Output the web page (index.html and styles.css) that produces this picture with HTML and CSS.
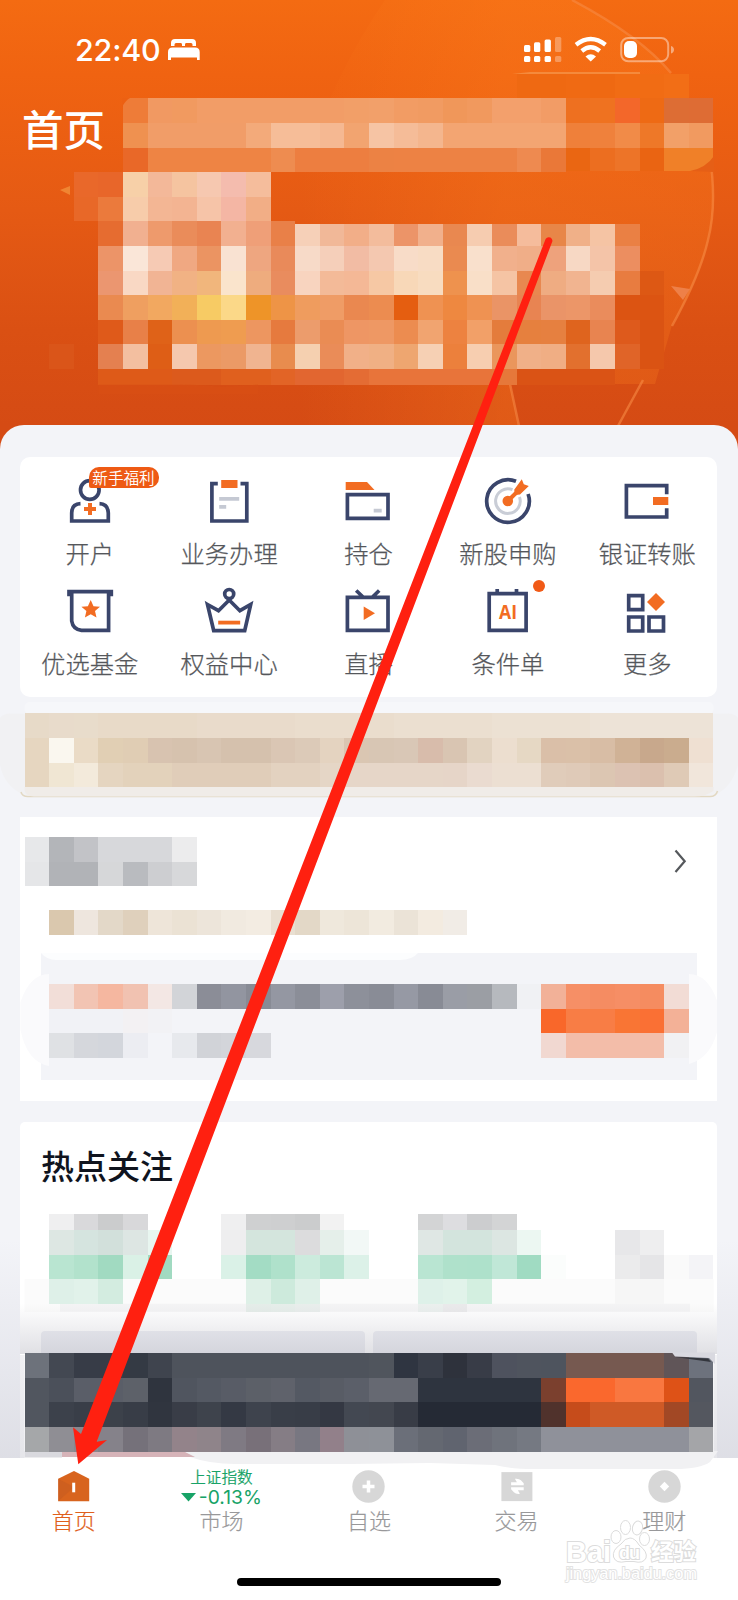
FILE: index.html
```html
<!DOCTYPE html>
<html lang="zh-CN">
<head>
<meta charset="utf-8">
<title>首页</title>
<link rel="stylesheet" href="styles.css">
</head>
<body>
<div class="page">
  <main class="content">
    <header class="hero">
      <svg class="hero-art" viewBox="0 0 738 450" aria-hidden="true">
        <defs>
          <linearGradient id="disc" x1="0" y1="0" x2="1" y2="0">
            <stop offset="0" stop-color="#ff8420" stop-opacity="0"/>
            <stop offset="0.5" stop-color="#ff8420" stop-opacity=".27"/>
            <stop offset="1" stop-color="#ff8420" stop-opacity=".22"/>
          </linearGradient>
        </defs>
        <path d="M385 0H572Q640 36 672 75Q713 128 714 200Q712 260 672 325L655 384H510L519 430H300V180Q330 80 385 0Z" fill="url(#disc)"/>
        <path d="M572 0Q640 36 671 73M710 157Q717 205 708 240Q700 275 672 326M643 380L618 426M510 384L519 426" fill="none" stroke="#f68b45" stroke-width="2.5" opacity=".6"/>
        <path d="M671 286L690 289L683 300Z" fill="#ee8048"/>
        <path d="M60 190L70 186V195Z" fill="#f08532"/>
        <path d="M512 74L530 72H640V74Z" fill="#f58a3c"/>
        <g data-mosaic="hero" shape-rendering="crispEdges"></g>
        <path d="M690 171Q706 168 714 156V172Z" fill="#e65f16"/>
        <path d="M122 98H130Q126 100 122 107Z" fill="#ec6012"/>
        <path d="M98.400 384.500H172Q200 384 222 387L258 384.500V394H98.400Z" fill="#da5014" opacity=".5"/>
      </svg>
      <div class="status">
        <div class="status-left">
          <span class="clock">22:40</span>
          <svg width="32" height="22" viewBox="168 40 32 22"><path d="M171 47V44Q171 40 175 40H192Q196 40 196 44V47H192.500V45.500Q192.500 44 191 44H186Q185 44 185 45.500V47H182V45.500Q182 44 181 44H176Q174.500 44 174.500 45.500V47ZM168 61V53Q168 48.500 172.500 48.500H195Q199.700 48.500 199.700 53V61H197V58.500H171V61Z" fill="#fff"/></svg>
        </div>
        <svg width="152" height="28" viewBox="523 36 152 28">
          <g fill="#fff">
            <rect x="524" y="45" width="6.300" height="7" rx="1.500"/><rect x="534" y="42.300" width="6.300" height="9.700" rx="1.500"/><rect x="544.600" y="39.500" width="6.300" height="12.500" rx="1.500"/>
            <rect x="524" y="56" width="6.300" height="6" rx="1.500"/><rect x="534" y="56" width="6.300" height="6" rx="1.500"/><rect x="544.600" y="56" width="6.300" height="6" rx="1.500"/>
            <g opacity=".3"><rect x="555" y="37" width="6.300" height="15" rx="1.500"/><rect x="555" y="56" width="6.300" height="6" rx="1.500"/></g>
            <path d="M590.700 61.500L585.500 56.500Q590.700 52 596 56.500Z"/>
          </g>
          <path d="M576 44.800Q590.700 33.300 605.500 44.800M581.800 51Q590.700 43.500 599.700 51" fill="none" stroke="#fff" stroke-width="4.300"/>
          <rect x="621.200" y="38" width="47" height="23.300" rx="7" fill="none" stroke="#fff" stroke-opacity=".42" stroke-width="2"/>
          <path d="M671 46Q674 47 674 49.700Q674 52.500 671 53.500Z" fill="#fff" opacity=".45"/>
          <rect x="624" y="41" width="13" height="17" rx="5" fill="#fff"/>
        </svg>
      </div>
      <h1 class="hero-title">首页</h1>
    </header>

    <div class="sheet">
      <section class="card shortcuts">
        <div class="shortcut">
          <svg class="shortcut-icon" viewBox="60 470 60 60"><circle class="ln" cx="89.800" cy="490" r="9.300"/><path class="ln" d="M80.500 503.700Q71.700 504 71.700 513V521H108.300V513Q108 504 99.500 503.700"/><path d="M90 503V515M84 509H96" stroke="#f26c22" stroke-width="4"/></svg>
          <span class="label">开户</span><span class="badge">新手福利</span>
        </div>
        <div class="shortcut">
          <svg class="shortcut-icon" viewBox="199.500 470 60 60"><path class="ln" d="M218.300 483.700H212.400V521H247.300V483.700H241"/><path d="M221.700 480H238V488H221.700Z" fill="#f26c22"/><path d="M219.700 497H239.700V500.700H219.700ZM219.700 505H226.700V508.700H219.700Z" fill="#c5c9d3"/></svg>
          <span class="label">业务办理</span>
        </div>
        <div class="shortcut">
          <svg class="shortcut-icon" viewBox="339 470 60 60"><path d="M346.700 482H368L375.500 490H346.700Z" fill="#f26c22"/><path class="ln" d="M348.400 494.700H389V518.300H348.400Z"/><path d="M374.700 508.700H382.700V512.500H374.700Z" fill="#c5c9d3"/></svg>
          <span class="label">持仓</span>
        </div>
        <div class="shortcut">
          <svg class="shortcut-icon" viewBox="478.500 470 60 60"><path class="ln" d="M516.500 481.300A21.300 21.300 0 1 0 528.600 494"/><path d="M513 489.700A12.300 12.300 0 1 0 520 497" fill="none" stroke="#c9cdd6" stroke-width="3"/><circle cx="508.300" cy="501" r="5.300" fill="#f26c22"/><path d="M508.300 501L518.500 491" stroke="#f26c22" stroke-width="4"/><path d="M514.700 489.700L522.300 479.300L524.300 484.300L529.300 486L520.500 494.500L515.500 495Z" fill="#f26c22"/></svg>
          <span class="label">新股申购</span>
        </div>
        <div class="shortcut">
          <svg class="shortcut-icon" viewBox="618 470 60 60"><path class="ln" d="M667.700 494.300V485.700H627.400V517H667.700V508.300"/><path d="M654 497H669.300V505H654Z" fill="#f26c22"/></svg>
          <span class="label">银证转账</span>
        </div>
        <div class="shortcut">
          <svg class="shortcut-icon" viewBox="60 580 60 60"><path class="ln" d="M69 596.300V591.700H111.300V596.300M71.700 592V621Q73 629.500 81.500 630.300H108.600V592"/><path d="M90.700 600L93.500 606.200L100 606.800L95 611.100L96.500 617.500L90.700 614.200L84.900 617.500L86.400 611.100L81.400 606.800L87.900 606.200Z" fill="#f26c22"/></svg>
          <span class="label">优选基金</span>
        </div>
        <div class="shortcut">
          <svg class="shortcut-icon" viewBox="199.500 580 60 60"><circle class="ln" cx="229.700" cy="594" r="4.500"/><path class="ln" d="M208 604.500L219 610.700L229.700 600L240.400 610.700L251.200 604.500L245.200 630.700H214.200Z"/><path d="M218.700 620.700H240.700V624.500H218.700Z" fill="#f26c22"/></svg>
          <span class="label">权益中心</span>
        </div>
        <div class="shortcut">
          <svg class="shortcut-icon" viewBox="339 580 60 60"><path class="ln" d="M348.400 597.400H389V630.300H348.400ZM357.200 590.500L364 597M380.200 590.500L373.500 597"/><path d="M364.700 606.500V620L376 613.200Z" fill="#f26c22"/></svg>
          <span class="label">直播</span>
        </div>
        <div class="shortcut">
          <svg class="shortcut-icon" viewBox="478.500 580 60 60"><path class="ln" d="M489.700 593.700H526.600V630.300H489.700ZM497.700 589V594M517 589V594"/><text class="ai" x="499.500" y="618.700" textLength="18" lengthAdjust="spacingAndGlyphs">AI</text></svg>
          <span class="label">条件单</span><i class="dot"></i>
        </div>
        <div class="shortcut">
          <svg class="shortcut-icon" viewBox="618 580 60 60"><path class="ln" d="M629.700 595.700H643.700V609.700H629.700ZM629.700 617H643.700V631H629.700ZM650 617H664.500V631H650Z"/><path d="M657 593L666 602L657 611L648 602Z" fill="#f26c22"/></svg>
          <span class="label">更多</span>
        </div>
      </section>

      <svg class="banner" viewBox="0 702 738 100" aria-hidden="true">
        <rect x="24.600" y="702" width="689" height="12" rx="5" fill="#f6f7fa"/>
        <path d="M0 718Q3 713.400 10 713.400H728Q735 713.400 738 718V765Q732 787 715 795H24Q4 786 0 765Z" fill="#f1f1f3"/>
        <path d="M21 792Q22 796.500 28 796.500H710Q716 796.500 717.500 791" fill="none" stroke="#e2d8c2" stroke-width="1.500"/>
        <path d="M24.600 787H713.400V791Q706 796.500 694 796.500H34Q26 796 24.600 791Z" fill="#f0ece8"/>
        <g data-mosaic="banner" shape-rendering="crispEdges"></g>
      </svg>

      <section class="card feature">
        <svg class="row-art" width="697" height="49" viewBox="20 836.500 697 49"><g data-mosaic="featureTitle" shape-rendering="crispEdges"></g><path d="M675.500 850L684.700 860.700L675.500 871.500" fill="none" stroke="#55585c" stroke-width="2.200"/></svg>
        <svg class="row-art feature-sub" width="697" height="25" viewBox="20 910 697 25"><g data-mosaic="featureSub" shape-rendering="crispEdges"></g></svg>
        <div class="panel">
          <svg class="panel-art" width="697" height="127" viewBox="20 953 697 127">
            <path d="M41 953H418Q412 960 400 960H56Q47 960 41 953Z" fill="#fcfdfe"/>
            <path d="M20.500 1002Q30 974 49 974V1066Q27 1062 20.500 1030ZM717.500 1002Q708 974 689 974V1064Q711 1058 717.500 1030Z" fill="#fafafc"/>
            <g data-mosaic="panel" shape-rendering="crispEdges"></g>
          </svg>
        </div>
      </section>

      <section class="card hot">
        <h2 class="hot-title">热点关注</h2>
        <svg class="row-art" width="697" height="98" viewBox="20 1214 697 98"><rect x="24.600" y="1279.200" width="689" height="33" fill="#fbfbfb"/><rect x="60" y="1303.800" width="630" height="8" fill="#f4f4f5"/><g data-mosaic="hot" shape-rendering="crispEdges"></g></svg>
        <div class="hot-links"><span></span><span></span></div>
      </section>
    </div>
    <svg class="notice" viewBox="0 1240 738 238" aria-hidden="true">
      <defs>
        <linearGradient id="shade" x1="0" y1="0" x2="0" y2="1"><stop offset="0" stop-color="#b8b8c8" stop-opacity="0"/><stop offset="1" stop-color="#b8b8c4" stop-opacity=".36"/></linearGradient>
        <linearGradient id="shade2" x1="0" y1="0" x2="0" y2="1"><stop offset="0" stop-color="#a8a8b4" stop-opacity="0"/><stop offset="1" stop-color="#a8a8b4" stop-opacity=".36"/></linearGradient>
      </defs>
      <path d="M0 1240H20V1355H24.600V1458H0ZM738 1240H717V1355H713.400V1458H738Z" fill="url(#shade)"/>
      <rect x="20" y="1304" width="697" height="50" fill="url(#shade2)"/>
      <path d="M24.600 1451H718L710 1462Q700 1469 675 1469H535Q510 1469 495 1465L430 1463L350 1464H235Q210 1464 190 1457H24.600Z" fill="#f1f1f3"/>
      <path d="M24.600 1451H62V1457.500H24.600Z" fill="#d9d9de"/>
      <path d="M62 1451.400H184L195 1457H62Z" fill="#d6b3b8"/>
      <g data-mosaic="notice" shape-rendering="crispEdges"></g>
      <path d="M672 1352.500H715V1364L709 1358L675 1356.500Z" fill="#d9d9e0"/>
      <path d="M675 1357L708 1358.500L711 1362Z" fill="#33363d"/>
    </svg>
  </main>

  <nav class="tabs">
    <div class="tab active">
      <svg width="32" height="32" viewBox="57.800 1470.500 32 32"><path d="M73.800 1471L89 1478.700V1501.300H58V1478.700Z" fill="#d8641e"/><path d="M58 1501.300V1478.700L73.800 1487Z" fill="#c45a20" opacity=".5"/><path d="M72 1482.700H75V1492.300H72Z" fill="#fff"/></svg>
      <span>首页</span>
    </div>
    <div class="tab">
      <div class="quote"><b>上证指数</b><em><svg width="15" height="9" viewBox="0 0 15 9"><path d="M0 0H15L7.500 8.500Z" fill="#18a367"/></svg>-0.13%</em></div>
      <span>市场</span>
    </div>
    <div class="tab">
      <svg width="33" height="33" viewBox="0 0 33 33"><circle cx="16.500" cy="16.500" r="16.200" fill="#d7d7d7"/><path d="M16.500 10.500V22.500M10.500 16.500H22.500" stroke="#fff" stroke-width="3.500"/></svg>
      <span>自选</span>
    </div>
    <div class="tab">
      <svg width="32" height="32" viewBox="500.600 1470.700 32 32"><path d="M501 1472.300H532V1501.300H501Z" fill="#d7d7d7"/><path d="M510.700 1482.500H516.500L514.500 1479Q518.500 1478.500 520.500 1480.500L523.300 1483.500V1485.500H510.700ZM523.300 1490.500H517.500L519.500 1494Q515.500 1494.500 513.500 1492.500L510.700 1489.500V1487.500H523.300Z" fill="#fff"/></svg>
      <span>交易</span>
    </div>
    <div class="tab">
      <svg width="33" height="33" viewBox="0 0 33 33"><circle cx="16.500" cy="16.500" r="16.200" fill="#d7d7d7"/><path d="M16.500 11.800L21.200 16.500L16.500 21.200L11.800 16.500Z" fill="#fff"/></svg>
      <span>理财</span>
    </div>
    <i class="home-bar"></i>
  </nav>

  <svg class="watermark" viewBox="560 1515 145 75">
    <g class="paw"><ellipse cx="616" cy="1537" rx="5" ry="6.500"/><ellipse cx="625.500" cy="1527.500" rx="5" ry="7"/><ellipse cx="637.500" cy="1528" rx="5" ry="7" transform="rotate(12 637.500 1528)"/><ellipse cx="644.500" cy="1539" rx="5" ry="6.500"/><path d="M630 1538Q635 1538 639 1545Q648 1552 646 1558Q643 1564 634 1561.500H626Q616 1564 613.500 1557Q612 1550 621 1544Q625 1538 630 1538Z"/></g>
    <text class="wm wm-big" x="566" y="1561.500" textLength="45" lengthAdjust="spacingAndGlyphs">Bai</text>
    <text class="wm wm-du" x="619" y="1559" textLength="21">du</text>
    <text class="wm wm-cn" x="651" y="1560">经验</text>
    <text class="wm wm-url" x="566" y="1579" textLength="131">jingyan.baidu.com</text>
  </svg>
  <svg class="arrow" viewBox="0 0 738 1600"><path d="M545.600 239Q547 236.500 550.500 237.500Q553 239.500 552.300 241.500L96.700 1441.700L107 1440L78.300 1464.300L73 1427.300L81 1434Z" fill="#ff2010"/></svg>
</div>
<script src="mosaic.js"></script>
</body>
</html>
```
FILE: styles.css
```css
* { box-sizing: border-box; }
body { margin: 0; font-family: "Noto Sans CJK SC", sans-serif; }
.page { position: relative; z-index: 0; width: 738px; height: 1600px; overflow: hidden; display: flex; flex-direction: column; background: #fff; }
.content { position: relative; flex: 1; min-height: 0; background: #f3f4f8; }

.hero { position: relative; height: 450px; background: linear-gradient(#f46b12 0, #f06311 75px, #e55a14 210px, #da5013 330px, #d54b14 425px); color: #fff; }
.hero-art { position: absolute; inset: 0; width: 738px; height: 450px; }
.status { position: relative; display: flex; justify-content: space-between; align-items: center; padding: 35px 63px 0 75px; height: 64px; }
.status-left { display: flex; align-items: center; gap: 8px; }
.clock { width: 85px; font: 500 30.5px/30px Inter, sans-serif; letter-spacing: -.2px; white-space: nowrap; }
.hero-title { position: relative; margin: 35px 0 0 22px; font-size: 41.5px; line-height: 58px; font-weight: 500; }

.sheet { position: relative; height: 1033px; overflow: hidden; margin-top: -25px; padding-top: 32px; background: #f3f4f8; border-radius: 24px 24px 0 0; }
.card { margin: 0 21px 0 20px; background: #fff; }
.shortcuts { display: grid; grid-template-columns: repeat(5, 1fr); row-gap: 12px; height: 240px; padding-top: 13px; align-content: start; border-radius: 10px; }
.shortcut { position: relative; display: flex; flex-direction: column; align-items: center; gap: 9px; height: 98px; }
.shortcut-icon { width: 60px; height: 60px; display: block; }
.ln { fill: none; stroke: #3a456b; stroke-width: 3.7; }
.ai { font: 700 19.5px "Open Sans", sans-serif; fill: #f26c22; }
.label { height: 28px; font-size: 24.3px; line-height: 28px; font-weight: 300; color: #55575b; -webkit-text-stroke: .25px #55575b; white-space: nowrap; }
.badge { position: absolute; left: 68.5px; top: -3px; width: 70px; height: 21px; border-radius: 10px 10px 10px 2px; background: #ee5a14; color: #fff; font-size: 15.6px; line-height: 20px; text-align: center; font-weight: 350; white-space: nowrap; }
.dot { position: absolute; left: 95px; top: 0; width: 12px; height: 12px; border-radius: 50%; background: #f15a17; }

.banner { display: block; width: 738px; height: 100px; margin: 5px 0 15px; }
.feature { height: 284px; padding-top: 19.5px; }
.row-art { display: block; }
.feature-sub { margin-top: 24.5px; }
.panel { margin: 18px 20px 0 21px; height: 127px; background: #f3f4f8; }
.panel-art { display: block; margin-left: -21px; }
.hot { height: 400px; margin-top: 21px; padding-top: 19px; border-radius: 5px; }
.hot-title { margin: 0 0 25px 21px; font-size: 33px; line-height: 48px; font-weight: 500; color: #10141e; }
.hot-links { display: grid; grid-template-columns: 1fr 1fr; gap: 8px; margin: 19px 20px 0 21px; }
.hot-links span { height: 60px; background: #edeef3; border-radius: 4px; }
.notice { position: absolute; left: 0; top: 1240px; width: 738px; height: 238px; }

.tabs { position: relative; z-index: -1; flex: none; height: 142px; display: grid; grid-template-columns: repeat(5, 1fr); background: #fff; }
.tab { display: flex; flex-direction: column; align-items: center; padding-top: 12px; color: #98989a; }
.tab > svg { height: 33px; display: block; }
.tab > span { margin-top: 2px; font-size: 22px; line-height: 28px; font-weight: 300; -webkit-text-stroke: .2px currentColor; }
.tab.active { color: #e0601c; }
.quote { height: 33px; display: flex; flex-direction: column; align-items: center; color: #18a367; white-space: nowrap; }
.quote b { margin-top: -2px; font-size: 15.6px; line-height: 17px; font-weight: 350; -webkit-text-stroke: .15px currentColor; }
.quote em { display: flex; align-items: center; gap: 3px; margin-top: 2px; font: 400 19.3px/20px Inter, sans-serif; }
.home-bar { position: absolute; left: 237px; top: 119.5px; width: 264px; height: 8.5px; border-radius: 5px; background: #000; }

.watermark { position: absolute; left: 560px; top: 1515px; width: 145px; height: 75px; }
.paw, .wm { fill: #fff; stroke: #dcdcdc; stroke-width: 1; paint-order: stroke; }
.paw { fill: none; }
.wm-big { font: 700 30px "Liberation Sans", sans-serif; stroke-width: 2; }
.wm-du { font: 700 18px "Liberation Sans", sans-serif; stroke-width: 2; }
.wm-cn { font: 700 22.5px "Noto Sans CJK SC", sans-serif; stroke-width: 2; }
.wm-url { font: 400 16.5px "Liberation Sans", sans-serif; stroke-width: 1.8; stroke: #e2e2e2; }
.arrow { position: absolute; inset: 0; width: 738px; height: 1600px; }
```
FILE: mosaic.js
```js
// Each run: [top, bottom, first column, "colours"]; "colour*n" repeats, "-" leaves a gap.
const CELL = 24.6;
const art = {
  hero: [
    [73.8, 98.4, 21, "ef6912 ef6912 f06a13 ef6912 f16c14 f16c14 f26e16"],
    [98.4, 123, 5, "ee7c38 f19962 f19a60 f29d67*6 f29f68 f2a06a f29c64 f19b62 f0975a f1995e f3a06c f3a06c f29c66 ee7020 ef7220 f3672a ee6a14 dd6d34 de6c34"],
    [123, 147.6, 5, "ef9150 f19d68*4 f3aa7a f6bd98 f6bd98 f5b892 f2a470 f6c4a4 f5bc98 f4b68e f3a572*5 ef803a ef813c f18b48 ee7828 f2a068 f19a60"],
    [147.6, 172.2, 5, "e96828 ee8444*5 ee8c50 ed7e40*3 ec8244 ed8244*5 ee8a50 ea7838"],
    [147.6, 170.5, 23, "ea6612 ec6e20 ed7428 ea6412 f08028 f08028"],
    [172.2, 196.8, 3, "e9682a e8662a f7d0a8 f3b899 f5c4a0 f6c8b0 f4bcae f5bd9c"],
    [196.8, 221.4, 3, "e86828 eb7a3c f7ccaa f3b694 f3b492 f6c4a8 f4b6a4 f2ae86"],
    [221.4, 246, 4, "e66c30 f1b090 ee9a6c ea8c5a e98452 f2b090 ef9f78 e98048"],
    [224, 246, 12, "f6d0b8 f1b898 f2ae88 f3bc9c ec9468 f1b08c e98850 f6ccb0 ea8c5a f5bc9c e88648 f0b088 f5c4a4 ea8044"],
    [246, 270.6, 4, "ec9468 fae6d8 f6cab4 f0a882 eb9462 f9e2d2 eea680 e98a5a f7dac8 f5cfba f2bca4 f4c8b0 f8dcc8 f8dcc4 ea8a50 f9e0cc f1b08c f0ae88 eea27c f7d8c4 f4c4a8 ec8e60"],
    [270.6, 295.2, 4, "eb9670 f9d8c4 f1b494 f1b284 f1b67c fae4cc eeac7e e98c5e f8d4bf f3ba98 f4b896 f6c8a4 f8d8b8 f8dcc0 ee924e f9dfc8 f5c4a4 e88850 efac82 f1b490 f5ccb0 e87c40 dd5814"],
    [295.2, 319.8, 4, "ea8a50 ef9f60 f2a860 f2b058 f7cb64 fbd888 ee9428 ee9446 ef9c5e ef9c66 ea8850 ec8c50 e55e10 ef9252 ee8840 ef9252 ea9466 e88452 ea9468 ec9668 ea8c5c dc5412 dc5412"],
    [319.8, 344.4, 4, "df5a1a e88048 df6218 ec9050 ee9a50 ef9c50 ed9660 e67a3e ec9c6c ea8c54 ee9664 ee9864 ec8c50 f1a470 ed8240 f2a068 e47c3c e6803e e68040 df641e e88450 de5a1c da5313"],
    [344.4, 369, 2, "da5519 - e48050 f3bfa0 de5e16 f5c8ae ec9860 eb9a66 f0b490 e88c4e f5d0b0 ea8c58 f1b088 f0b084 eea670 f6d0b4 ec803c f7ceb0 ea965c f0b088 f0ae84 e2702e f5c8ac e06428 da5313"],
    [369, 384.6, 4, "de5a18*3 dc5a1c*2 e0601e*2 e26426 e26630*2 e46c34 e8743a*5 e6783a da5315*4"]
  ],
  banner: [
    [713.4, 738, 1, "e7dac8 e8dbcb e8dccb e8dac8*4 e9dbcb*4 eaddcd*4 ebdfd0*4 ece1d3*4 ede3d7*5"],
    [738, 762.6, 1, "e6d6c0 faf7ef eadbc6 e1cfb4 e0cdb4 d8c3b0 d6c2ae d8c5b2 d5c1ad d5c1ad dac6b4 dccab8 e4d3c0 dac6b2 d8c6b4 d9c7b6 d8bcab d9c5b2 e2d3c1 ecdecf e6d8c4 dabfa8 dac0a8 d8bda5 d0b296 c8a88c caac8e efe0d2"],
    [762.6, 787.2, 1, "e6d6c0 f0e6d3 f3eadb e5d5c0 e3d2bb*2 e0cdb9*4 e3d2c0*2 e5d6c6 e6d6c8*4 e6d5c8 eadbd0 ecdfd2*2 e0ccba dfcab8 dcc6b2 dcc2b2 dbc0ae dfcab6 f1e6db"]
  ],
  featureTitle: [
    [836.4, 861, 1, "e7e8ea b3b5b9 c2c3c7 d7d8db*3 ececed"],
    [861, 885.6, 1, "e5e6e8 b1b3b7*2 d6d7d9 b9bbbf cdced1 d7d8da"]
  ],
  featureSub: [
    [910.2, 934.8, 2, "dac8ae eee6de e3d8c8 dfd0bc eee5d9 ebe2d4 ede5da f1eae0 f3ece2 e9dfd1 e3d8c7 efe8dc ede5d8 f2ebe0 ebe3d7 f3ebe0 f1ece6"]
  ],
  panel: [
    [984, 1008.6, 2, "f2ded8 f2c4b3 f5b7a0 f1c2b1 f3e7e4 d2d4d8 8b8d97 9295a0 888b95 9497a2 8b8e98 9d9fab 8d909a 898c96 9699a4 888b95 9a9da6 9b9ea4 b6b9be f0f1f4 f2b198 f68f66 f58c62 f68e65 f58c60 f2dcd5"],
    [1008.6, 1033.2, 2, "f1f2f6*3 f3f1f3 f2f2f5 -*15 f9672a f87d45*2 f97534 fa7034 f3b197"],
    [1033.2, 1057.8, 2, "dfe1e4 d5d7dc d3d6dc ecedf2 - e7e9ed d1d3d8 d3d5da d7d8dd -*11 f1d8d1 f3bda9*4 f1f1f3"]
  ],
  hot: [
    [1214, 1230, 2, "efeff0 d9d9db cbcccd d8d8da -*3 efeff0 cfd0d1 cecfd0 cbcccd f2f2f2 -*3 d3d4d5 dddde0 cccdcf d3d4d5"],
    [1230, 1254.6, 2, "dde7e3 d5e4df d2e0db dde6e3 e8f6f0 -*2 eeeeef d4e5dd*2 dcdcdd e5efea f2f8f6 -*2 dfe7e4 d3e4dd*2 dce6e2 ecf7f2 -*3 e7e7e9 eeeeef"],
    [1254.6, 1279.2, 2, "b9e5d1 b2e2cc a1dac1 daf1e6 a1dac1 -*2 daf1e7 a3dcc4 afe1cb ccebdd bbe5d3 dcf1e8 -*2 b9e5d2 afe1cb aee1cb c0e7d7 a0dbc2 fbfdfc -*2 ebebec e5e5e7 fafafa f4f4f7"],
    [1279.2, 1303.8, 2, "def0e8 e1f2ea d3ece0 -*5 def0e7 cdeadc dff0e8 -*4 def1e9 e1f3ea d3efe0 -*5 f6f6f6*2"],
    [1303.8, 1312, 10, "e5ede9 e6eeea e9eeec -*4 ebf0ee eaeaeb"]
  ],
  notice: [
    [1353, 1377.6, 1, "6d727b 434852 373c47 373c47 343a44 3f444e 4e535c*8 50555d 2f3541 393e49 2e323c 383c47 4e525e 4f545e 4e545e 765950*4 605558 6d727d"],
    [1377.6, 1402.2, 1, "51565f 4b505a 5a5e68 5a5e68 5d6169 2f343e 50555f 545963 585c66 5c6068 5f626b 545963 585c65 5b5f69 666972*2 2e343f*5 7b402e fa682d*2 f97740*2 de5217 52565f"],
    [1402.2, 1426.8, 1, "51565f 3c414b 393e48 3c414a 383d47 30353f 393d47 3e434c 343944 3e434d 393e48 383d47 343843 434852 434750 383c46 252a35*5 50322c c64c1b cf5a26*3 a24825 54575f"],
    [1426.8, 1451.6, 1, "a5a7a9 8f8e94 8b878d 85828a 75717a 7e7a82 93838a 8f848a 7f7a83 787079 857d85 787781 92808a 8e9097 8e9198 6b6f79 646871 60646f 6b6d77 6f737c 757982 8f919a*6 a4a5a8"]
  ]
};

for (const group of document.querySelectorAll("[data-mosaic]")) {
  for (const [top, bottom, first, colours] of art[group.dataset.mosaic]) {
    let column = first;
    for (const token of colours.split(" ")) {
      const [colour, count = "1"] = token.split("*");
      for (let i = 0; i < Number(count); i++, column++) {
        if (colour === "-") continue;
        const cell = document.createElementNS("http://www.w3.org/2000/svg", "rect");
        cell.setAttribute("x", (column * CELL).toFixed(1));
        cell.setAttribute("y", top);
        cell.setAttribute("width", CELL);
        cell.setAttribute("height", (bottom - top).toFixed(1));
        cell.setAttribute("fill", "#" + colour);
        group.append(cell);
      }
    }
  }
}
```
